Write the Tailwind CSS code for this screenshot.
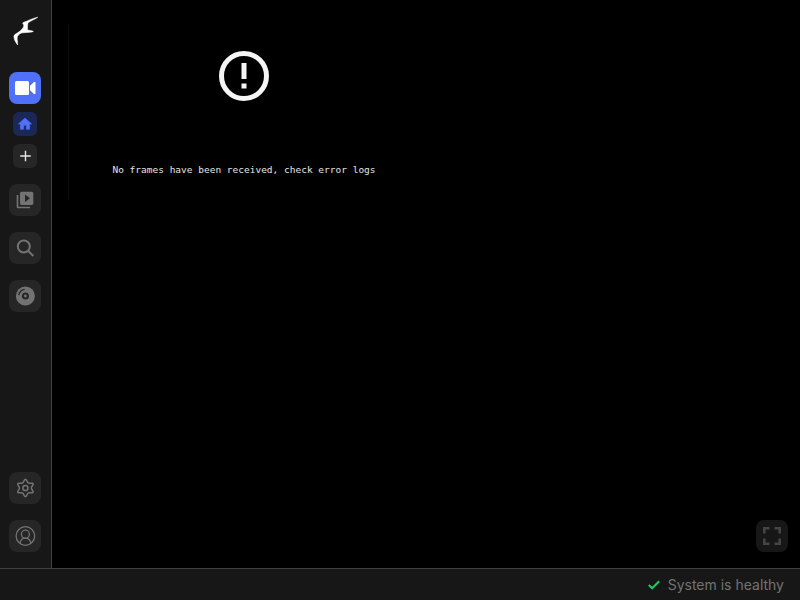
<!DOCTYPE html>
<html lang="en">
<head>
<meta charset="utf-8">
<meta name="viewport" content="width=device-width, initial-scale=1">
<title>Live</title>
<script src="https://cdn.jsdelivr.net/npm/@tailwindcss/browser@4"></script>
</head>
<body class="flex h-screen flex-col bg-black font-['Inter',sans-serif] text-[#737373]">
<div class="flex min-h-0 flex-1">
  <aside class="flex w-13 shrink-0 flex-col items-center justify-between border-r border-[#404040] bg-[#171717] py-4 pr-px">
    <nav class="flex flex-col items-center gap-4" aria-label="Main">
      <a href="#" aria-label="Home page" class="mb-2 block size-8">
        <svg viewBox="0 0 32 32" class="size-8 fill-white stroke-white" stroke-width=".5"><path d="M28.800 1.200C26 3.400 21.500 4.800 19 6.800C18.600 8.500 18.400 11.500 18.600 13.800C20 14.700 22.500 14.300 24.400 15.400C22 16.700 16.500 16.200 12.500 17C10 18 8.400 19.500 8.200 21.800C8 24 8.900 26 8.600 29C6.800 26.500 4.900 23.500 4.900 20.500C5 18 8.400 17.300 10.400 15.600C12 14 13.600 12.600 14.400 11.200C15 9.700 14.800 8.500 13.600 7.300C14 5.800 16.500 6 18.200 5C21 3.400 25 2.100 28.800 1.200Z"/></svg>
      </a>
      <div class="flex flex-col items-center gap-2">
        <a href="#" aria-label="Live" class="flex size-8 items-center justify-center rounded-lg bg-[#4f70f7] text-white">
          <svg viewBox="0 0 24 24" class="size-6 fill-current"><path d="M3.500 5H14.500Q16 5 16 6.500V17.500Q16 19 14.500 19H3.500Q2 19 2 17.500V6.500Q2 5 3.500 5ZM17 9.700L20.700 6.200Q22.500 5.200 22.500 7V17Q22.500 18.800 20.700 17.800L17 14.300Z"/></svg>
        </a>
        <button type="button" aria-label="All cameras" class="flex size-6 items-center justify-center rounded-md bg-[#1b2857] text-[#4f70f7]">
          <svg viewBox="0 0 24 24" class="size-4 fill-current stroke-current" stroke-width=".8" stroke-linejoin="round"><path d="M10 20v-6h4v6h5v-8h3L12 3 2 12h3v8z"/></svg>
        </button>
        <button type="button" aria-label="Add group" class="flex size-6 items-center justify-center rounded-md bg-[#262626] text-[#e5e5e5]">
          <svg viewBox="0 0 16 16" class="size-4 fill-none stroke-current" stroke-width="1.400"><path d="M8.500 2.700V13.300M3.200 8H13.800"/></svg>
        </button>
      </div>
      <a href="#" aria-label="Review" class="flex size-8 items-center justify-center rounded-lg bg-[#262626]">
        <svg viewBox="0 0 24 24" class="size-5 fill-current" fill-rule="evenodd"><path d="M4 6H2v14c0 1.100.900 2 2 2h14v-2H4V6zm16-4H8c-1.100 0-2 .900-2 2v12c0 1.100.900 2 2 2h12c1.100 0 2-.900 2-2V4c0-1.100-.900-2-2-2zm-8 12.500v-9l6 4.500-6 4.500z"/></svg>
      </a>
      <a href="#" aria-label="Explore" class="flex size-8 items-center justify-center rounded-lg bg-[#262626]">
        <svg viewBox="0 0 20 20" class="size-5 fill-none stroke-current" stroke-width="2"><circle cx="8.800" cy="8.500" r="6"/><path d="M13 12.800L18.300 18"/></svg>
      </a>
      <a href="#" aria-label="Export" class="flex size-8 items-center justify-center rounded-lg bg-[#262626]">
        <svg viewBox="0 0 20 20" class="size-5"><circle cx="10.400" cy="10" r="9.500" class="fill-current"/><circle cx="10.400" cy="10" r="2.500" class="fill-none stroke-[#262626]" stroke-width="2.200"/><path d="M3.800 9.200A7 7 0 0 1 9.600 3.400" class="fill-none stroke-[#262626]" stroke-width="1.400"/></svg>
      </a>
    </nav>
    <div class="flex flex-col gap-4">
      <button type="button" aria-label="Settings" class="flex size-8 items-center justify-center rounded-lg bg-[#262626]">
        <svg viewBox="0 0 20 20" class="size-5 fill-none stroke-current" stroke-width="1.500" stroke-linejoin="round"><circle cx="10.400" cy="10" r="2.600"/><path d="M9.700 1.600H11.100L12.800 4.600L14.100 5.300L17.500 5.200L18.200 6.400L16.500 9.200V10.800L18.200 13.600L17.500 14.800L14.100 14.700L12.800 15.400L11.100 18.400H9.700L8 15.400L6.700 14.700L3.300 14.800L2.600 13.600L4.300 10.800V9.200L2.600 6.400L3.300 5.200L6.700 5.300L8 4.600Z"/></svg>
      </button>
      <button type="button" aria-label="Account" class="flex size-8 items-center justify-center rounded-lg bg-[#262626]">
        <svg viewBox="0 0 20 20" class="size-5 overflow-visible fill-none stroke-current" stroke-width="1.300"><circle cx="10.400" cy="10" r="9.300"/><circle cx="10.400" cy="8.200" r="4"/><path d="M4.900 17C5.700 14 7.700 12.200 10.400 12.200S15.100 14 15.900 17"/></svg>
      </button>
    </div>
  </aside>
  <main class="relative min-w-0 flex-1 px-4 py-6">
    <svg viewBox="0 0 704 352" class="w-88 max-w-full" role="img" aria-label="Camera frame">
      <path d="M1 0V352" class="stroke-[#0b0b0b]" stroke-width="2"/>
      <circle cx="352" cy="104" r="45" class="fill-none stroke-[#f5f5f5]" stroke-width="10"/>
      <path d="M347 78H357V110H347ZM347 119H357V129H347Z" class="fill-[#f5f5f5]"/>
      <text x="352" y="298" text-anchor="middle" font-size="19" class="fill-[#e5e5e5] font-['DejaVu_Sans_Mono',monospace]">No frames have been received, check error logs</text>
    </svg>
    <button type="button" aria-label="Fullscreen" class="absolute right-3 bottom-4 flex size-8 items-center justify-center rounded-lg bg-[#171717] text-[#444444]">
      <svg viewBox="0 0 20 20" class="size-5 fill-none stroke-current" stroke-width="2.600"><path d="M2.300 7.500V2.300H7.500M12.500 2.300H17.700V7.500M17.700 12.500V17.700H12.500M7.500 17.700H2.300V12.500"/></svg>
    </button>
  </main>
</div>
<footer class="flex h-8 shrink-0 items-center justify-end gap-2 border-t border-[#404040] bg-[#171717] px-4 text-sm">
  <svg viewBox="0 0 12 12" class="size-3 fill-none stroke-[#22c55e]" stroke-width="2.200"><path d="M.800 6L4.200 9.300L11.200 2.300"/></svg>
  <p>System is healthy</p>
</footer>
</body>
</html>
